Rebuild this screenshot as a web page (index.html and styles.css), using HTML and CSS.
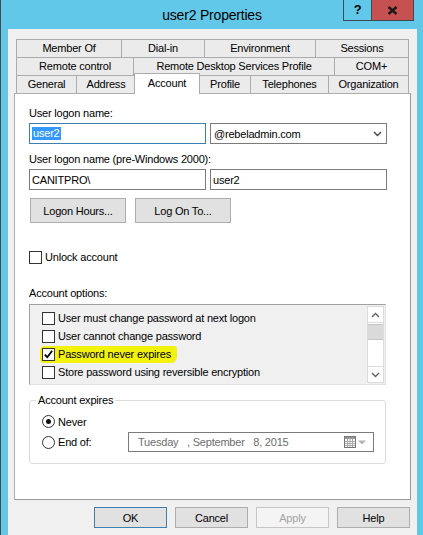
FILE: index.html
```html
<!DOCTYPE html>
<html lang="en">
<head>
    <meta charset="UTF-8">
    <title>user2 Properties</title>
    <link rel="stylesheet" href="styles.css">
</head>
<body>
<div class="window">
    <div class="titlebar">
        user2 Properties
        <div class="caption-buttons">
            <span class="cap-btn cap-help">?</span>
            <span class="cap-btn cap-close">
                <svg width="11" height="9" viewBox="0 0 11 9"><path d="M1.5 1 L9.5 8 M9.5 1 L1.5 8" stroke="#1a1a1a" stroke-width="2.4" fill="none"/></svg>
            </span>
        </div>
    </div>

    <div class="dialog">
        <!-- Tabs -->
        <div class="tabs">
            <div class="tab-row row1">
                <span class="tab">Member Of</span>
                <span class="tab">Dial-in</span>
                <span class="tab">Environment</span>
                <span class="tab">Sessions</span>
            </div>
            <div class="tab-row row2">
                <span class="tab">Remote control</span>
                <span class="tab">Remote Desktop Services Profile</span>
                <span class="tab">COM+</span>
            </div>
            <div class="tab-row row3">
                <span class="tab">General</span>
                <span class="tab">Address</span>
                <span class="tab active">Account</span>
                <span class="tab">Profile</span>
                <span class="tab">Telephones</span>
                <span class="tab">Organization</span>
            </div>
        </div>

        <div class="panel">
            <div class="field-label">User logon name:</div>
            <div class="field-row">
                <div class="textbox focused"><span class="selected-text">user2</span></div>
                <div class="textbox combo">
                    @rebeladmin.com
                    <svg class="chevron" width="9" height="6" viewBox="0 0 9 6"><polyline points="1,1 4.5,4.5 8,1" stroke="#444" stroke-width="1.4" fill="none"/></svg>
                </div>
            </div>

            <div class="field-label second">User logon name (pre-Windows 2000):</div>
            <div class="field-row">
                <div class="textbox">CANITPRO\</div>
                <div class="textbox">user2</div>
            </div>

            <div class="button-row">
                <button class="btn">Logon Hours...</button>
                <button class="btn">Log On To...</button>
            </div>

            <div class="check-line unlock"><span class="checkbox"></span>Unlock account</div>

            <div class="field-label options-label">Account options:</div>
            <div class="listbox">
                <div class="list-items">
                    <div class="list-item"><span class="checkbox"></span>User must change password at next logon</div>
                    <div class="list-item"><span class="checkbox"></span>User cannot change password</div>
                    <div class="list-item">
                        <span class="marker">
                            <span class="checkbox">
                                <svg width="11" height="11" viewBox="0 0 11 11"><path d="M1.8 5.6 L4.3 8.2 L9.2 1.8" stroke="#000" stroke-width="1.8" fill="none"/></svg>
                            </span>Password never expires
                        </span>
                    </div>
                    <div class="list-item"><span class="checkbox"></span>Store password using reversible encryption</div>
                </div>
                <div class="scrollbar">
                    <div class="sb-arrow">
                        <svg width="9" height="6" viewBox="0 0 9 6"><polyline points="1,5 4.5,1.5 8,5" stroke="#606060" stroke-width="1.3" fill="none"/></svg>
                    </div>
                    <div class="sb-thumb"></div>
                    <div class="sb-track"></div>
                    <div class="sb-arrow down">
                        <svg width="9" height="6" viewBox="0 0 9 6"><polyline points="1,1 4.5,4.5 8,1" stroke="#606060" stroke-width="1.3" fill="none"/></svg>
                    </div>
                </div>
            </div>

            <fieldset class="expires">
                <legend>Account expires</legend>
                <div class="radio-line"><span class="radio checked"></span>Never</div>
                <div class="radio-line end">
                    <span class="radio"></span>End of:
                    <div class="datepicker">
                        <span class="dp-text">Tuesday   , September   8, 2015</span>
                        <span class="dp-icons">
                            <svg width="12" height="12" viewBox="0 0 12 12">
                                <rect x="0.5" y="0.5" width="11" height="11" fill="#fff" stroke="#777"/>
                                <rect x="1" y="1" width="10" height="2" fill="#999"/>
                                <path d="M1 5.5 H11 M1 7.5 H11 M1 9.5 H11 M3.5 3 V11 M6 3 V11 M8.5 3 V11" stroke="#aaa" stroke-width="1"/>
                            </svg>
                            <svg width="8" height="5" viewBox="0 0 8 5"><polygon points="0,0.5 8,0.5 4,4.5" fill="#b4b4b4"/></svg>
                        </span>
                    </div>
                </div>
            </fieldset>
        </div>

        <div class="actions">
            <button class="btn default">OK</button>
            <button class="btn">Cancel</button>
            <button class="btn disabled">Apply</button>
            <button class="btn">Help</button>
        </div>
    </div>
</div>
</body>
</html>
```

FILE: styles.css
```css
* {
    box-sizing: border-box;
}
body {
    margin: 0;
    font-family: "Liberation Sans", Arial, sans-serif;
    font-size: 11px;
    letter-spacing: -0.2px;
    color: #000;
}
.window {
    position: relative;
    width: 423px;
    height: 535px;
    background: #62c8ea;
    border-left: 1px solid #3c4a52;
    overflow: hidden;
}
.titlebar {
    height: 29px;
    line-height: 30px;
    text-align: center;
    font-size: 14px;
}
.caption-buttons {
    position: absolute;
    top: 0;
    right: 9px;
    display: flex;
    border: 1px solid #3d4a52;
    border-top: none;
}
.cap-btn {
    height: 20px;
    display: flex;
    align-items: center;
    justify-content: center;
}
.cap-help {
    width: 28px;
    border-right: 1px solid #3d4a52;
    font-weight: bold;
    font-size: 13px;
}
.cap-close {
    width: 41px;
    background: #c75050;
}
.dialog {
    margin-left: 7px;
    width: 409px;
    height: 506px;
    background: #f0f0f0;
    padding: 10px 6px 0;
}

/* tabs */
.tabs {
    margin: 0 2px;
}
.tab-row {
    display: grid;
    height: 18px;
    border-left: 1px solid #acacac;
}
.row1 {
    grid-template-columns: 105px 83px 111px 1fr;
}
.row2 {
    grid-template-columns: 117px 201px 1fr;
}
.row3 {
    grid-template-columns: 60px 59px 64px 51px 78px 1fr;
}
.tab {
    border-top: 1px solid #acacac;
    border-right: 1px solid #acacac;
    background: #ebebeb;
    text-align: center;
    line-height: 17px;
    white-space: nowrap;
}
.tab.active {
    position: relative;
    z-index: 1;
    margin: -2px 0 -1px -2px;
    border-left: 1px solid #acacac;
    background: #fff;
    line-height: 18px;
}

/* panel */
.panel {
    height: 407px;
    background: #fff;
    border: 1px solid #adadad;
    border-right-color: #999;
    border-bottom-color: #999;
    padding: 12px 22px 0 14px;
}
.field-label {
    line-height: 15px;
    margin-bottom: 2px;
}
.field-label.second {
    margin-top: 8px;
}
.field-row {
    display: flex;
    gap: 4px;
}
.textbox {
    width: 177px;
    height: 21px;
    border: 1px solid #7a7a7a;
    background: #fff;
    display: flex;
    align-items: center;
    padding-left: 2px;
}
.textbox.focused {
    border-color: #3c7fb1;
}
.combo {
    padding: 0 4px 0 3px;
    justify-content: space-between;
}
.selected-text {
    background: #3399ff;
    color: #fff;
    line-height: 13px;
    padding: 0 1px;
}
.button-row {
    display: flex;
    gap: 9px;
    margin: 8px 0 0 1px;
}
.btn {
    width: 96px;
    height: 25px;
    padding: 0;
    background: #e1e1e1;
    border: 1px solid #adadad;
    font: inherit;
    letter-spacing: inherit;
    color: #000;
}
.check-line {
    display: flex;
    align-items: center;
    line-height: 15px;
    margin-top: 27px;
}
.checkbox {
    width: 13px;
    height: 13px;
    flex: none;
    margin-right: 3px;
    border: 1px solid #333;
    background: #fff;
    display: flex;
    align-items: center;
    justify-content: center;
}
.options-label {
    margin-top: 21px;
    margin-bottom: 3px;
}

/* account options list */
.listbox {
    display: flex;
    width: 357px;
    height: 81px;
    border: 1px solid;
    border-color: #a0a0a0 #e3e3e3 #e3e3e3 #a0a0a0;
    background: #f0f0f0;
}
.list-items {
    flex: 1;
    padding: 4px 0 0 12px;
}
.list-item {
    height: 18px;
    display: flex;
    align-items: center;
    white-space: nowrap;
}
.marker {
    display: flex;
    align-items: center;
    height: 17px;
    margin-left: -2px;
    padding: 0 6px 0 2px;
    background: #f2f20c;
    border-radius: 5px 3px 6px 4px;
}
.scrollbar {
    width: 17px;
    margin: 1px 1px 1px 0;
    background: #fff;
    border: 1px solid #dcdcdc;
    display: flex;
    flex-direction: column;
}
.sb-arrow {
    height: 16px;
    display: flex;
    align-items: center;
    justify-content: center;
    border-bottom: 1px solid #dcdcdc;
}
.sb-arrow.down {
    border-bottom: none;
    border-top: 1px solid #dcdcdc;
}
.sb-thumb {
    height: 16px;
    margin-top: 1px;
    background: #dadada;
    border-top: 1px solid #c6c6c6;
    border-bottom: 1px solid #c6c6c6;
}
.sb-track {
    flex: 1;
}

/* account expires */
.expires {
    width: 357px;
    min-width: 0;
    margin: 8px 0 0;
    padding: 0 11px 11px 12px;
    border: 1px solid #dcdcdc;
    border-radius: 3px;
}
.expires legend {
    padding: 0 2px;
    margin-left: -6px;
    line-height: 15px;
}
.radio-line {
    display: flex;
    align-items: center;
    height: 15px;
    margin-top: 6px;
}
.radio-line.end {
    height: 20px;
    margin-top: 3px;
}
.radio {
    width: 13px;
    height: 13px;
    flex: none;
    margin-right: 3px;
    border: 1px solid #333;
    border-radius: 50%;
    background: #fff;
    display: flex;
    align-items: center;
    justify-content: center;
}
.radio.checked::after {
    content: "";
    width: 5px;
    height: 5px;
    border-radius: 50%;
    background: #111;
}
.datepicker {
    margin-left: auto;
    width: 246px;
    height: 20px;
    border: 1px solid #7a7a7a;
    display: flex;
    align-items: center;
    padding: 0 7px 0 9px;
    color: #6d6d6d;
}
.dp-text {
    white-space: pre;
}
.dp-icons {
    margin-left: auto;
    display: flex;
    align-items: center;
    gap: 2px;
}

/* dialog buttons */
.actions {
    display: flex;
    justify-content: flex-end;
    gap: 8px;
    margin-top: 7px;
    padding-right: 1px;
}
.actions .btn {
    width: 73px;
    height: 21px;
}
.btn.default {
    border-color: #3c7fb1;
}
.btn.disabled {
    background: #f4f4f4;
    border-color: #c6c6c6;
    color: #a3a3a3;
}
```
